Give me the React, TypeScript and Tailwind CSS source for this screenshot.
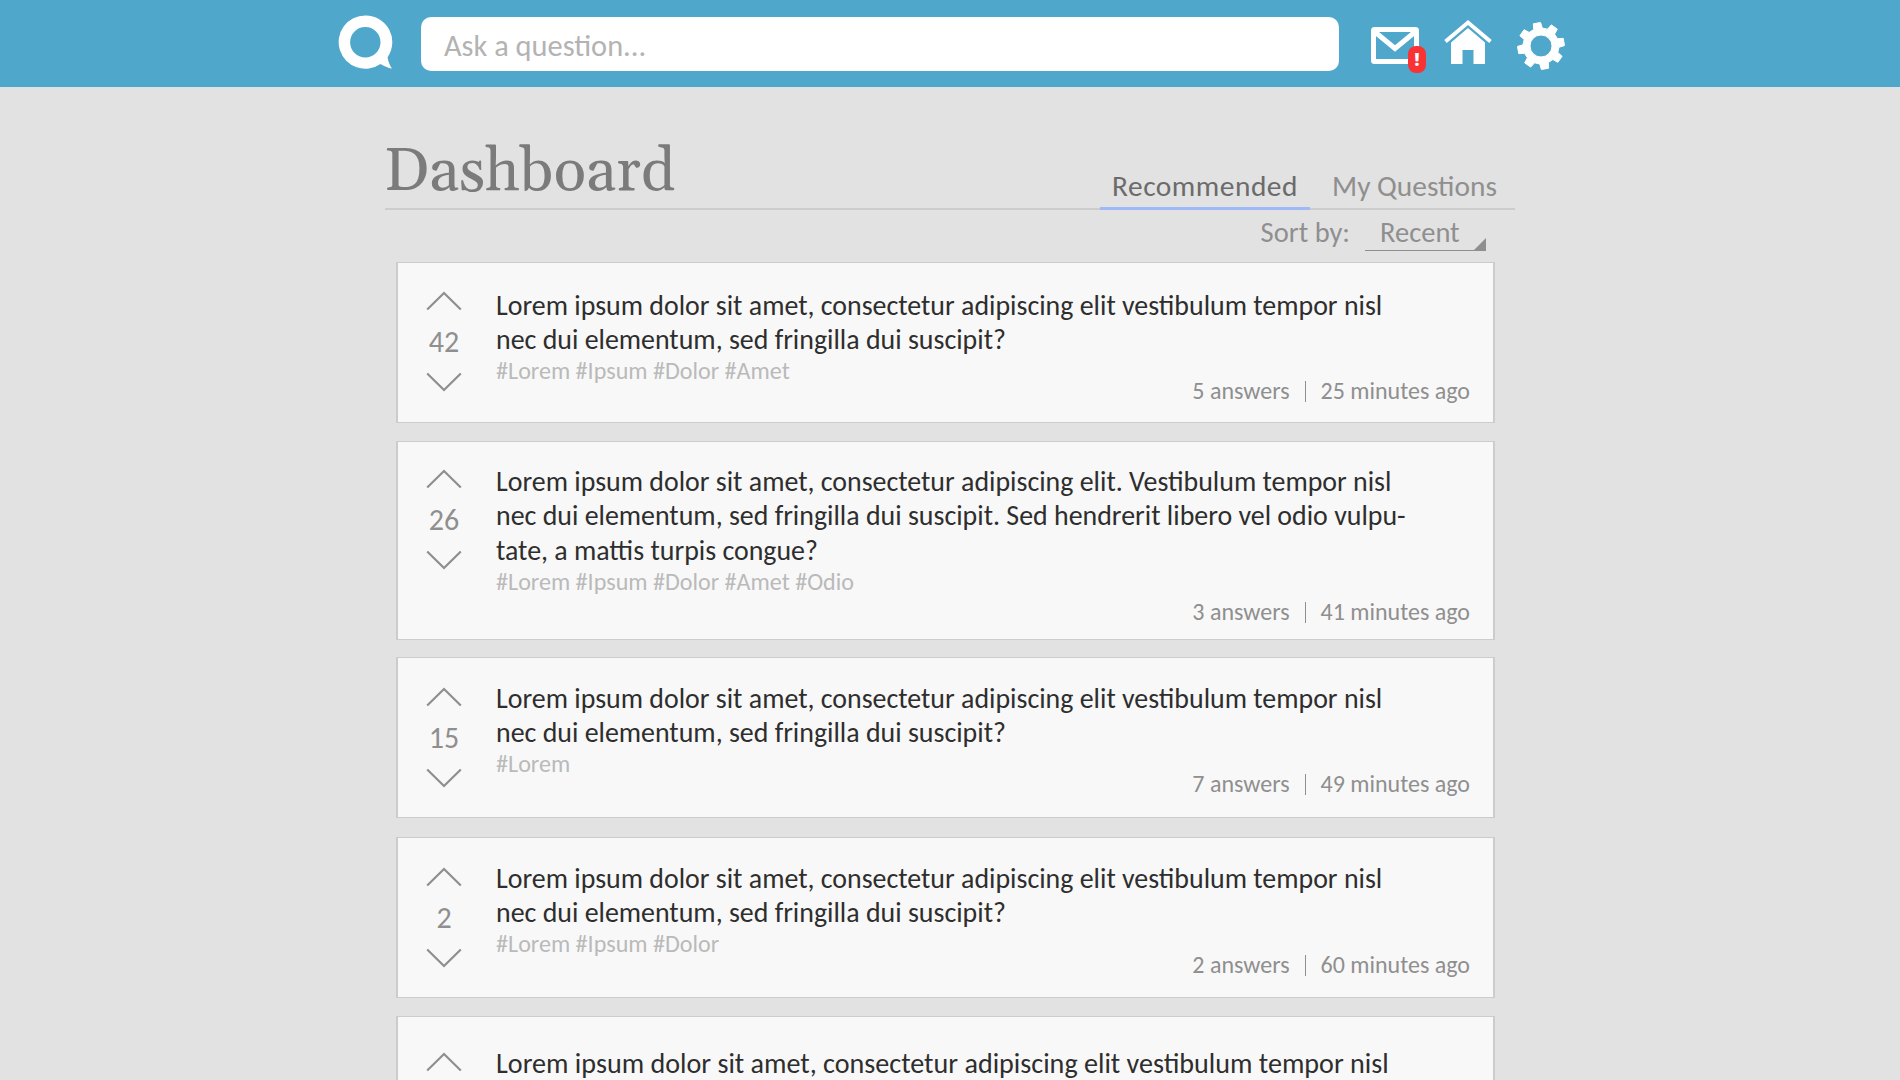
type Question = {
  votes: number;
  lines: string[];
  tags: string;
  answers: number;
  age: string;
  box: string;
  votePad: string;
  textPad: string;
  metaPad: string;
};

const opening = 'Lorem ipsum dolor sit amet, consectetur adipiscing elit vestibulum tempor nisl';
const ending = 'nec dui elementum, sed fringilla dui suscipit?';

const questions: Question[] = [
  {
    votes: 42,
    lines: [opening, ending],
    tags: '#Lorem #Ipsum #Dolor #Amet',
    answers: 5,
    age: '25 minutes ago',
    box: 'h-[161px] text-[27.9px]',
    votePad: 'pt-[28px]',
    textPad: 'pt-[25px]',
    metaPad: 'pb-[17px]',
  },
  {
    votes: 26,
    lines: [
      'Lorem ipsum dolor sit amet, consectetur adipiscing elit. Vestibulum tempor nisl',
      'nec dui elementum, sed fringilla dui suscipit. Sed hendrerit libero vel odio vulpu-',
      'tate, a mattis turpis congue?',
    ],
    tags: '#Lorem #Ipsum #Dolor #Amet #Odio',
    answers: 3,
    age: '41 minutes ago',
    box: 'mt-[18px] h-[199px] text-[27.9px]',
    votePad: 'pt-[27px]',
    textPad: 'pt-[22px]',
    metaPad: 'pb-[13px]',
  },
  {
    votes: 15,
    lines: [opening, ending],
    tags: '#Lorem',
    answers: 7,
    age: '49 minutes ago',
    box: 'mt-[17px] h-[161px] text-[27.9px]',
    votePad: 'pt-[29px]',
    textPad: 'pt-[23px]',
    metaPad: 'pb-[19px]',
  },
  {
    votes: 2,
    lines: [opening, ending],
    tags: '#Lorem #Ipsum #Dolor',
    answers: 2,
    age: '60 minutes ago',
    box: 'mt-[19px] h-[161px] text-[27.9px]',
    votePad: 'pt-[29px]',
    textPad: 'pt-[23px]',
    metaPad: 'pb-[18px]',
  },
];

function Chevron({ down = false }: { down?: boolean }) {
  return (
    <svg width="36" height="20" viewBox="0 0 36 20" fill="none" stroke="#8f8f8f" strokeWidth="2.2">
      <path d={down ? 'M1.2 1.5L18 18L34.8 1.5' : 'M1.2 18.5L18 2L34.8 18.5'} />
    </svg>
  );
}

function Card({ q }: { q: Question }) {
  return (
    <article className={`flex shrink-0 border-x-2 border-y border-[#cccccc] bg-[#f8f8f8] ${q.box}`}>
      <div className={`flex w-[98px] shrink-0 flex-col items-center pr-[6px] ${q.votePad}`}>
        <Chevron />
        <span className="mt-[13px] mb-[12px] text-[30px] leading-[36px] text-[#8f8f8f]">{q.votes}</span>
        <Chevron down />
      </div>
      <div className={`flex flex-1 flex-col text-[#2e2e2e] ${q.textPad}`}>
        {q.lines.map((line) => (
          <p key={line} className="leading-[34px] nth-3:pt-px">
            {line}
          </p>
        ))}
        <p className="-mb-[20px] text-[24.1px] leading-[29px] text-[#bababa]">{q.tags}</p>
        <div
          className={`mt-auto flex items-center self-end pr-[23px] text-[24px] leading-[28px] text-[#8f8f8f] ${q.metaPad}`}
        >
          <span>{q.answers} answers</span>
          <span className="mx-[15px] h-[21px] w-px bg-[#8f8f8f]" />
          <span>{q.age}</span>
        </div>
      </div>
    </article>
  );
}

// Eight-toothed cog with a round hole, rotated ten degrees.
const gear = (() => {
  const pts: string[] = [];
  for (let i = 0; i < 8; i++) {
    const c = -10 + i * 45;
    for (const [da, r] of [
      [-14, 18],
      [-9, 23.5],
      [9, 23.5],
      [14, 18],
    ]) {
      const a = ((c + da) * Math.PI) / 180;
      pts.push(`${(25 + r * Math.cos(a)).toFixed(2)} ${(25 + r * Math.sin(a)).toFixed(2)}`);
    }
  }
  return `M${pts.join('L')}ZM36 25a11 11 0 1 0 -22 0a11 11 0 1 0 22 0Z`;
})();

export default function App() {
  return (
    <div className="flex h-[1080px] flex-col overflow-hidden bg-[#e2e2e2] font-['Carlito','Calibri','Lato',sans-serif] whitespace-nowrap">
      <header className="flex h-[87px] shrink-0 bg-[#4fa7cb] pl-[338px]">
        <svg className="mt-[15px] shrink-0" width="56" height="56" viewBox="0 0 56 56" fill="#fff">
          <path
            fillRule="evenodd"
            d="M27.3 .5a26.6 26.6 0 1 0 15.2 48.4C46 50.8 50 52.8 54 53.6C51.6 50 50 46 49.6 42.2A26.6 26.6 0 0 0 27.3 .5ZM27.3 12a15.2 15.2 0 1 1 0 30.4a15.2 15.2 0 0 1 0 -30.4Z"
          />
        </svg>
        <div className="mt-[17px] ml-[27px] h-[54px] w-[918px] rounded-[10px] bg-white pl-[23px] text-[30.4px] leading-[57px] text-[#b3b3b3]">
          Ask a question...
        </div>
        <div className="relative mt-[27px] ml-[32px] h-[37px] w-[48px]">
          <svg width="48" height="37" viewBox="0 0 48 37" fill="none" stroke="#fff" strokeWidth="5">
            <rect x="2.5" y="2.5" width="43" height="32" rx="1" />
            <path d="M4 5L24 21.5L44 5" />
          </svg>
          <span className="absolute top-[19px] left-[37px] flex h-[27px] w-[18px] items-center justify-center rounded-[8px] bg-[#f93333] font-['Open_Sans',sans-serif] text-[17px] font-extrabold text-white">
            !
          </span>
        </div>
        <svg className="mt-[19px] ml-[25px]" width="48" height="46" viewBox="0 0 48 46" fill="#fff">
          <path d="M24 9L41 23.5V45H29.5V31H18.5V45H7V23.5Z" />
          <path d="M1.5 22.5L24 3.5L46.5 22.5" fill="none" stroke="#fff" strokeWidth="4" />
        </svg>
        <svg className="mt-[21px] ml-[24px]" width="50" height="50" viewBox="0 0 50 50">
          <path d={gear} fill="#fff" fillRule="evenodd" stroke="#fff" strokeWidth="1" strokeLinejoin="round" />
        </svg>
      </header>

      <main className="mx-auto flex w-[1132px] flex-col">
        <div className="ml-px flex h-[123px] w-[1130px] shrink-0 items-end justify-between border-b-2 border-[#cdcdcd]">
          <h1 className="-mb-[3px] -ml-px font-['Gelasio','Georgia',serif] text-[60px] leading-[76px] text-[#7b7b7b]">
            Dashboard
          </h1>
          <nav className="-mb-[2px] flex text-[29.4px] leading-[36px]">
            <span className="w-[210px] border-b-3 border-[#9fb9f7] pb-[3px] text-center tracking-[0.5px] text-[#6b6b6b]">
              Recommended
            </span>
            <span className="w-[205px] pl-[22px] text-[#8f8f8f]">My Questions</span>
          </nav>
        </div>
        <div className="flex h-[52px] shrink-0 justify-end pr-[30px] text-[28.5px] leading-[37px] text-[#8f8f8f]">
          <span className="pt-[4px]">Sort by:</span>
          <div className="relative ml-[15px] h-[41px] w-[121px] border-b border-[#8f8f8f] pt-[4px] pl-[15px]">
            Recent
            <svg className="absolute right-0 bottom-0" width="12" height="12" viewBox="0 0 12 12">
              <path d="M12 0V12H0Z" fill="#8f8f8f" />
            </svg>
          </div>
        </div>
        <div className="ml-[12px] flex w-[1099px] flex-col">
          {questions.map((q) => (
            <Card key={q.votes} q={q} />
          ))}
          <article className="mt-[18px] flex h-[64px] shrink-0 border-x-2 border-t border-[#cccccc] bg-[#f8f8f8] text-[28.1px]">
            <div className="flex w-[98px] shrink-0 flex-col items-center pt-[35px] pr-[6px]">
              <Chevron />
            </div>
            <p className="flex-1 pt-[30px] leading-[34px] text-[#2e2e2e]">{opening}</p>
          </article>
        </div>
      </main>
    </div>
  );
}
